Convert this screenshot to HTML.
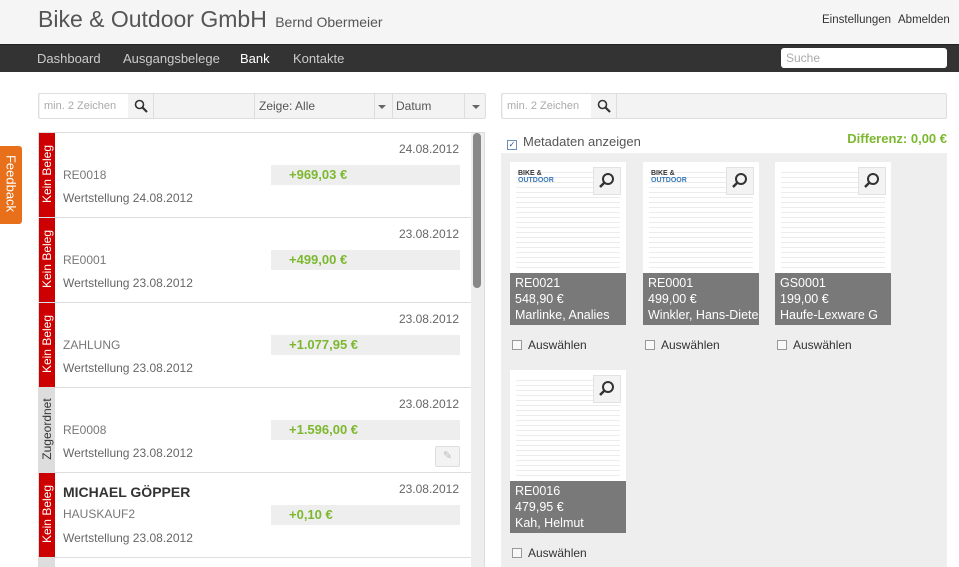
<!DOCTYPE html>
<html><head><meta charset="utf-8"><style>
*{box-sizing:border-box;margin:0;padding:0}
html,body{width:959px;height:567px;overflow:hidden}
body{background:#fff;font-family:"Liberation Sans",Arial,sans-serif;position:relative;color:#555}
.hdr{position:absolute;left:0;top:0;width:959px;height:44px;background:#f5f5f5}
.title{position:absolute;left:38px;top:6px;font-size:23px;color:#555}
.title small{font-size:14px;color:#555;margin-left:2px}
.tr{position:absolute;top:14px;font-size:11.5px;color:#333}
.nav{position:absolute;left:0;top:44px;width:959px;height:28px;background:#333;border-top:1px solid #222}
.nav span{position:absolute;top:6px;font-size:13px;color:#ccc}
.search{position:absolute;left:781px;top:48px;width:166px;height:20px;background:#fff;border-radius:3px;font-size:12px;color:#aaa;padding:3px 5px}
.bar{position:absolute;height:26px;background:#f3f3f3;border:1px solid #ddd;border-radius:2px}
.inp{position:absolute;background:#fff;font-size:11px;color:#aaa;padding:6px 4px;height:24px;top:0}
.sel{position:absolute;top:5px;font-size:12px;color:#555}
.list{position:absolute;left:38px;top:132px;width:447px;height:435px;border:1px solid #ddd;border-bottom:none;background:#eee;overflow:hidden}
.item{position:absolute;left:0;width:432px;height:85px;background:#fff;border-bottom:1px solid #ddd}
.lab{position:absolute;left:0;top:0;width:16px;height:84px;background:#cc0000}
.lab span{position:absolute;left:-34px;top:34px;width:84px;transform:rotate(-90deg);text-align:center;font-size:12px;color:#fff}
.lab.g{background:#ddd}.lab.g span{color:#333}
.d{position:absolute;right:12px;top:9px;font-size:12px;color:#666}
.r{position:absolute;left:24px;top:35px;font-size:12px;color:#777}
.w{position:absolute;left:24px;top:58px;font-size:12px;color:#666}
.am{position:absolute;left:232px;top:32px;width:189px;height:20px;background:#eee;font-size:13px;font-weight:bold;color:#7cb82f;padding:2px 18px}
.sb{position:absolute;left:473px;top:133px;width:8px;height:155px;background:#888;border-radius:4px}
.rp{position:absolute;left:501px;top:153px;width:446px;height:414px;background:#eee}
.card{position:absolute;width:116px;height:163px;background:#fff;overflow:hidden}
.doc{position:absolute;left:6px;top:6px;width:104px;height:100px;background:
repeating-linear-gradient(#fff 0 4px,#ececec 4px 5px)}
.mag{position:absolute;right:5px;top:5px;width:28px;height:28px;background:#f3f3f3;border:1px solid #e2e2e2}
.ov{position:absolute;left:0;top:111px;width:116px;height:52px;background:rgba(110,110,110,.92);color:#fff;font-size:12.5px;line-height:16px;padding:2px 5px;white-space:nowrap;overflow:hidden}
.aus{position:absolute;font-size:12px;color:#333}
.cb{display:inline-block;width:10px;height:10px;border:1px solid #999;background:#f8f8f8;margin-right:6px;vertical-align:-1px}
.logo{position:absolute;left:8px;top:8px;font-size:7px;font-weight:bold;line-height:7px;color:#333}
.logo b{color:#3a7ab8}
</style></head><body>
<div class="hdr"><div class="title">Bike &amp; Outdoor GmbH <small>Bernd Obermeier</small></div>
<span class="tr" style="left:822px">Einstellungen</span><span class="tr" style="left:898px">Abmelden</span></div>
<div class="nav"><span style="left:37px">Dashboard</span><span style="left:123px">Ausgangsbelege</span><span style="left:240px;color:#fff">Bank</span><span style="left:293px">Kontakte</span></div>
<div class="search">Suche</div>

<div style="position:absolute;left:0;top:146px;width:22px;height:78px;background:#e8701a;border-radius:0 3px 3px 0"><span style="position:absolute;left:-28px;top:30px;width:78px;transform:rotate(90deg);text-align:center;color:#fff;font-size:13px">Feedback</span></div>

<div class="bar" style="left:38px;top:93px;width:448px">
<div class="inp" style="left:1px;width:88px">min. 2 Zeichen</div>
<svg style="position:absolute;left:95px;top:5px" width="14" height="14" viewBox="0 0 14 14"><circle cx="5.5" cy="5.5" r="4" fill="none" stroke="#333" stroke-width="1.6"/><path d="M8.5 8.5L13 13" stroke="#333" stroke-width="2.2"/></svg>
<div style="position:absolute;left:114px;top:0;width:1px;height:24px;background:#ddd"></div>
<div style="position:absolute;left:215px;top:0;width:1px;height:24px;background:#ddd"></div>
<span class="sel" style="left:220px">Zeige: Alle</span>
<div style="position:absolute;left:335px;top:0;width:1px;height:24px;background:#ddd"></div>
<span style="position:absolute;left:339px;top:11px;border:4px solid transparent;border-top-color:#666"></span>
<div style="position:absolute;left:353px;top:0;width:1px;height:24px;background:#ddd"></div>
<span class="sel" style="left:357px">Datum</span>
<div style="position:absolute;left:425px;top:0;width:1px;height:24px;background:#ddd"></div>
<span style="position:absolute;left:433px;top:11px;border:4px solid transparent;border-top-color:#666"></span>
</div>

<div class="list">
<div class="item" style="top:0"><div class="lab"><span>Kein Beleg</span></div><div class="d">24.08.2012</div><div class="r">RE0018</div><div class="am">+969,03 €</div><div class="w">Wertstellung 24.08.2012</div></div>
<div class="item" style="top:85px"><div class="lab"><span>Kein Beleg</span></div><div class="d">23.08.2012</div><div class="r">RE0001</div><div class="am">+499,00 €</div><div class="w">Wertstellung 23.08.2012</div></div>
<div class="item" style="top:170px"><div class="lab"><span>Kein Beleg</span></div><div class="d">23.08.2012</div><div class="r">ZAHLUNG</div><div class="am">+1.077,95 €</div><div class="w">Wertstellung 23.08.2012</div></div>
<div class="item" style="top:255px"><div class="lab g"><span>Zugeordnet</span></div><div class="d">23.08.2012</div><div class="r">RE0008</div><div class="am">+1.596,00 €</div><div class="w">Wertstellung 23.08.2012</div>
<div style="position:absolute;left:396px;top:58px;width:25px;height:21px;border:1px solid #ddd;border-radius:2px;background:#f3f3f3;color:#bbb;font-size:11px;text-align:center;line-height:19px">✎</div></div>
<div class="item" style="top:340px"><div class="lab"><span>Kein Beleg</span></div><div class="d">23.08.2012</div><div style="position:absolute;left:24px;top:11px;font-size:14px;font-weight:bold;color:#333">MICHAEL GÖPPER</div><div class="r" style="top:34px">HAUSKAUF2</div><div class="am">+0,10 €</div><div class="w">Wertstellung 23.08.2012</div></div>
<div class="item" style="top:425px"><div class="lab g"></div></div>
</div>
<div class="sb"></div>

<div class="bar" style="left:501px;top:93px;width:446px">
<div class="inp" style="left:1px;width:88px">min. 2 Zeichen</div>
<svg style="position:absolute;left:95px;top:5px" width="14" height="14" viewBox="0 0 14 14"><circle cx="5.5" cy="5.5" r="4" fill="none" stroke="#333" stroke-width="1.6"/><path d="M8.5 8.5L13 13" stroke="#333" stroke-width="2.2"/></svg>
<div style="position:absolute;left:114px;top:0;width:1px;height:24px;background:#ddd"></div>
</div>
<div style="position:absolute;left:507px;top:134px;font-size:13px;color:#555"><span class="cb" style="border-color:#6a8fc0;background:#fff;text-align:center;font-size:8px;line-height:8px;color:#2a4f8a">✓</span>Metadaten anzeigen</div>
<div style="position:absolute;right:12px;top:131px;font-size:13px;font-weight:bold;color:#7cb82f">Differenz: 0,00 €</div>

<div class="rp">
<div class="card" style="left:9px;top:9px"><div class="doc"></div><div class="logo">BIKE &amp;<br><b>OUTDOOR</b></div><div class="mag"><svg width="26" height="26" viewBox="0 0 26 26"><circle cx="14" cy="11" r="5" fill="none" stroke="#333" stroke-width="2"/><path d="M10.5 14.5L6 19" stroke="#333" stroke-width="2.5"/></svg></div><div class="ov">RE0021<br>548,90 €<br>Marlinke, Analies</div></div>
<div class="card" style="left:142px;top:9px"><div class="doc"></div><div class="logo">BIKE &amp;<br><b>OUTDOOR</b></div><div class="mag"><svg width="26" height="26" viewBox="0 0 26 26"><circle cx="14" cy="11" r="5" fill="none" stroke="#333" stroke-width="2"/><path d="M10.5 14.5L6 19" stroke="#333" stroke-width="2.5"/></svg></div><div class="ov">RE0001<br>499,00 €<br>Winkler, Hans-Dieter</div></div>
<div class="card" style="left:274px;top:9px"><div class="doc"></div><div class="mag"><svg width="26" height="26" viewBox="0 0 26 26"><circle cx="14" cy="11" r="5" fill="none" stroke="#333" stroke-width="2"/><path d="M10.5 14.5L6 19" stroke="#333" stroke-width="2.5"/></svg></div><div class="ov">GS0001<br>199,00 €<br>Haufe-Lexware G</div></div>
<div class="aus" style="left:11px;top:185px"><span class="cb"></span>Auswählen</div>
<div class="aus" style="left:144px;top:185px"><span class="cb"></span>Auswählen</div>
<div class="aus" style="left:276px;top:185px"><span class="cb"></span>Auswählen</div>
<div class="card" style="left:9px;top:217px"><div class="doc"></div><div class="mag"><svg width="26" height="26" viewBox="0 0 26 26"><circle cx="14" cy="11" r="5" fill="none" stroke="#333" stroke-width="2"/><path d="M10.5 14.5L6 19" stroke="#333" stroke-width="2.5"/></svg></div><div class="ov">RE0016<br>479,95 €<br>Kah, Helmut</div></div>
<div class="aus" style="left:11px;top:393px"><span class="cb"></span>Auswählen</div>
</div>
</body></html>
